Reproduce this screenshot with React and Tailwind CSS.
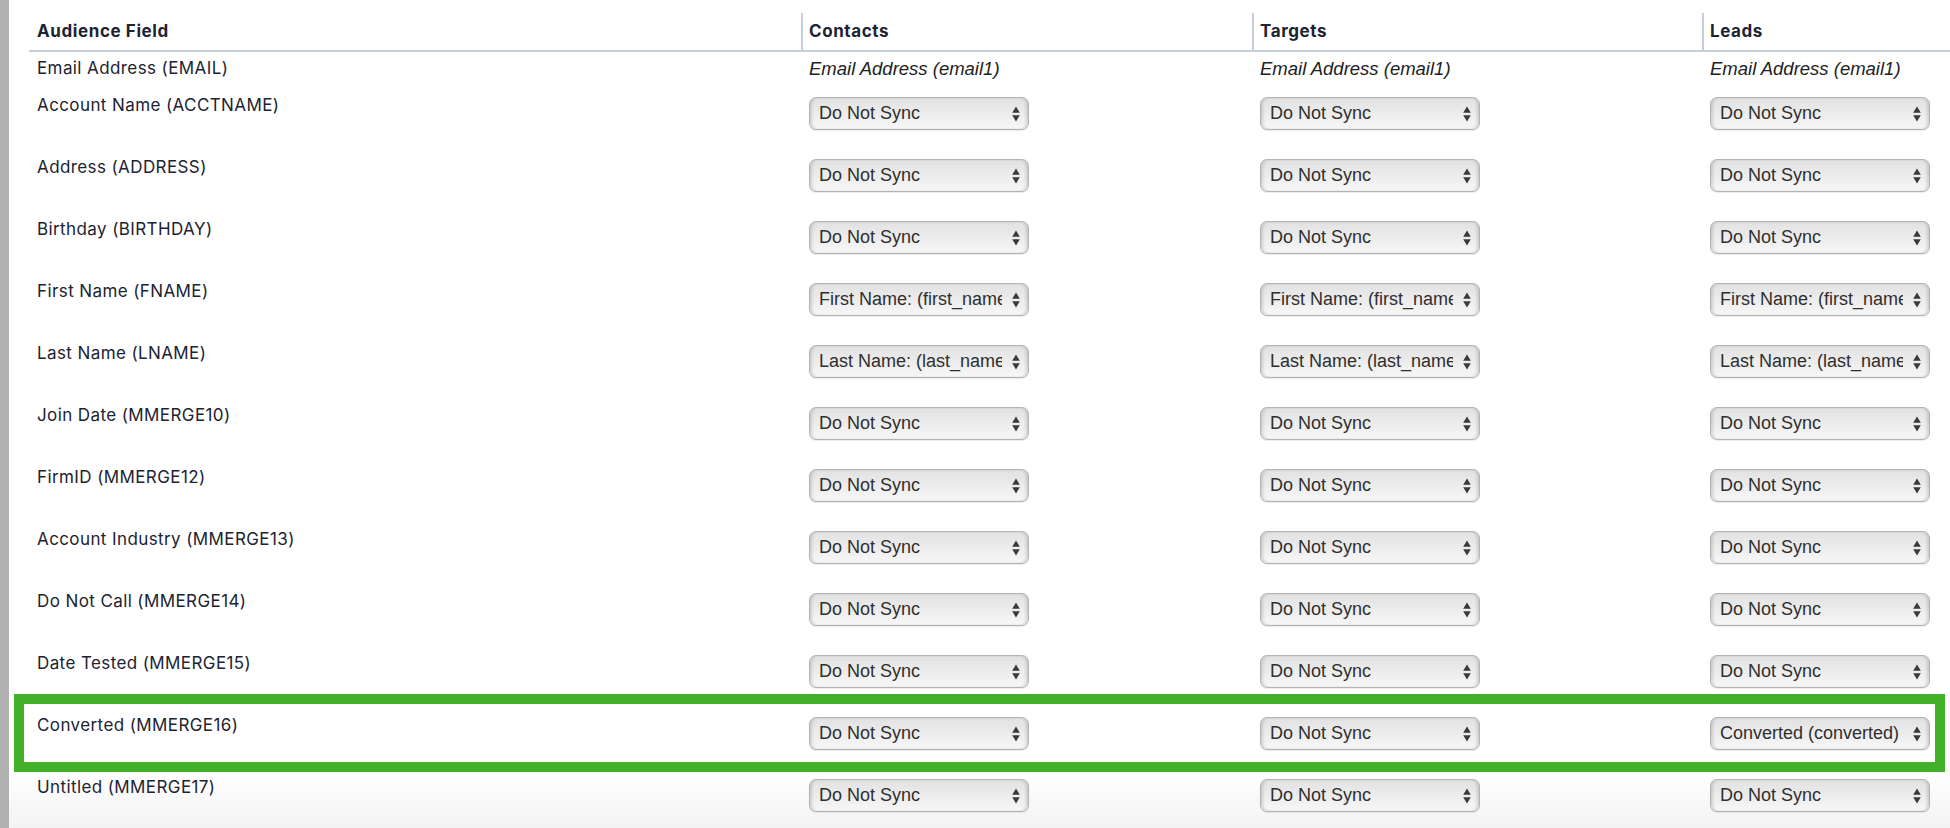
import React from "react";

const SYNC = "Do Not Sync";

const rows = [
  { label: "Account Name (ACCTNAME)" },
  { label: "Address (ADDRESS)" },
  { label: "Birthday (BIRTHDAY)" },
  { label: "First Name (FNAME)", all: "First Name: (first_name)" },
  { label: "Last Name (LNAME)", all: "Last Name: (last_name)" },
  { label: "Join Date (MMERGE10)" },
  { label: "FirmID (MMERGE12)" },
  { label: "Account Industry (MMERGE13)" },
  { label: "Do Not Call (MMERGE14)" },
  { label: "Date Tested (MMERGE15)" },
  { label: "Converted (MMERGE16)", leads: "Converted (converted)", highlight: true },
  { label: "Untitled (MMERGE17)" },
];

const Arrows = () => (
  <svg width="8" height="16" viewBox="0 0 8 16" className="absolute right-[8px] top-1/2 -translate-y-1/2">
    <path d="M4 0.5 L7.8 6.8 L0.2 6.8 Z" fill="#3a3a3a" />
    <path d="M4 15.5 L7.8 9.2 L0.2 9.2 Z" fill="#3a3a3a" />
  </svg>
);

const FieldSelect = ({ value }) => (
  <div className="relative w-[220px] h-[33px] rounded-[7px] border border-[#b4b4b4] bg-linear-to-b from-[#e2e2e2] via-[#ececec] to-[#f7f7f7] shadow-[inset_3px_0_3px_-1px_rgba(0,0,0,0.14),inset_-3px_0_3px_-1px_rgba(0,0,0,0.14),0_1px_1px_rgba(0,0,0,0.08)]">
    <div className="absolute left-[9px] right-[26px] top-0 bottom-0 overflow-hidden whitespace-nowrap font-['Liberation_Sans',Arial,sans-serif] text-[18px] leading-[31px] text-[#2f2f2f]">
      {value}
    </div>
    <Arrows />
  </div>
);

const headCell = "h-[37px] flex items-center border-l-2 border-[#c5cfdc] pl-[6px]";

export default function App() {
  return (
    <div className="flex w-full h-[828px] overflow-hidden bg-white">
      <div className="w-[9px] shrink-0 bg-[#b0b0b0]" />
      <div className="flex-1 pl-[20px] bg-[linear-gradient(to_bottom,#ffffff_93%,#f3f3f3)] font-['Inter',sans-serif] text-[#1c2331] tracking-[0.025em]">
        <div className="grid grid-cols-[772px_451px_450px_1fr]">
          {/* header */}
          <div className="col-span-4 grid grid-cols-subgrid pt-[13px] border-b-2 border-[#c5cfdc] text-[17px] font-bold tracking-[0.035em]">
            <div className="h-[37px] flex items-center pl-[8px]">Audience Field</div>
            <div className={headCell}>Contacts</div>
            <div className={headCell}>Targets</div>
            <div className={headCell}>Leads</div>
          </div>

          {/* email is always mapped */}
          <div className="col-span-4 grid grid-cols-subgrid h-[33px] items-center">
            <div className="pl-[8px] text-[17px]">Email Address (EMAIL)</div>
            {["c", "t", "l"].map((k) => (
              <div key={k} className="pl-[8px] italic text-[18.5px] tracking-normal text-[#222] font-['Liberation_Sans',Arial,sans-serif]">
                Email Address (email1)
              </div>
            ))}
          </div>

          {rows.map((r) => (
            <div key={r.label} className="relative col-span-4 grid grid-cols-subgrid h-[62px]">
              <div className="pl-[8px] pt-[8px] text-[17px] leading-[24px]">{r.label}</div>
              <div className="pl-[8px] pt-[12px] tracking-normal">
                <FieldSelect value={r.all || SYNC} />
              </div>
              <div className="pl-[8px] pt-[12px] tracking-normal">
                <FieldSelect value={r.all || SYNC} />
              </div>
              <div className="pl-[8px] pt-[12px] tracking-normal">
                <FieldSelect value={r.leads || r.all || SYNC} />
              </div>
              {r.highlight && (
                <div className="absolute left-[-15px] top-[-11px] w-[1931px] h-[78px] border-[10px] border-[#43b02a] pointer-events-none" />
              )}
            </div>
          ))}
        </div>
      </div>
    </div>
  );
}
